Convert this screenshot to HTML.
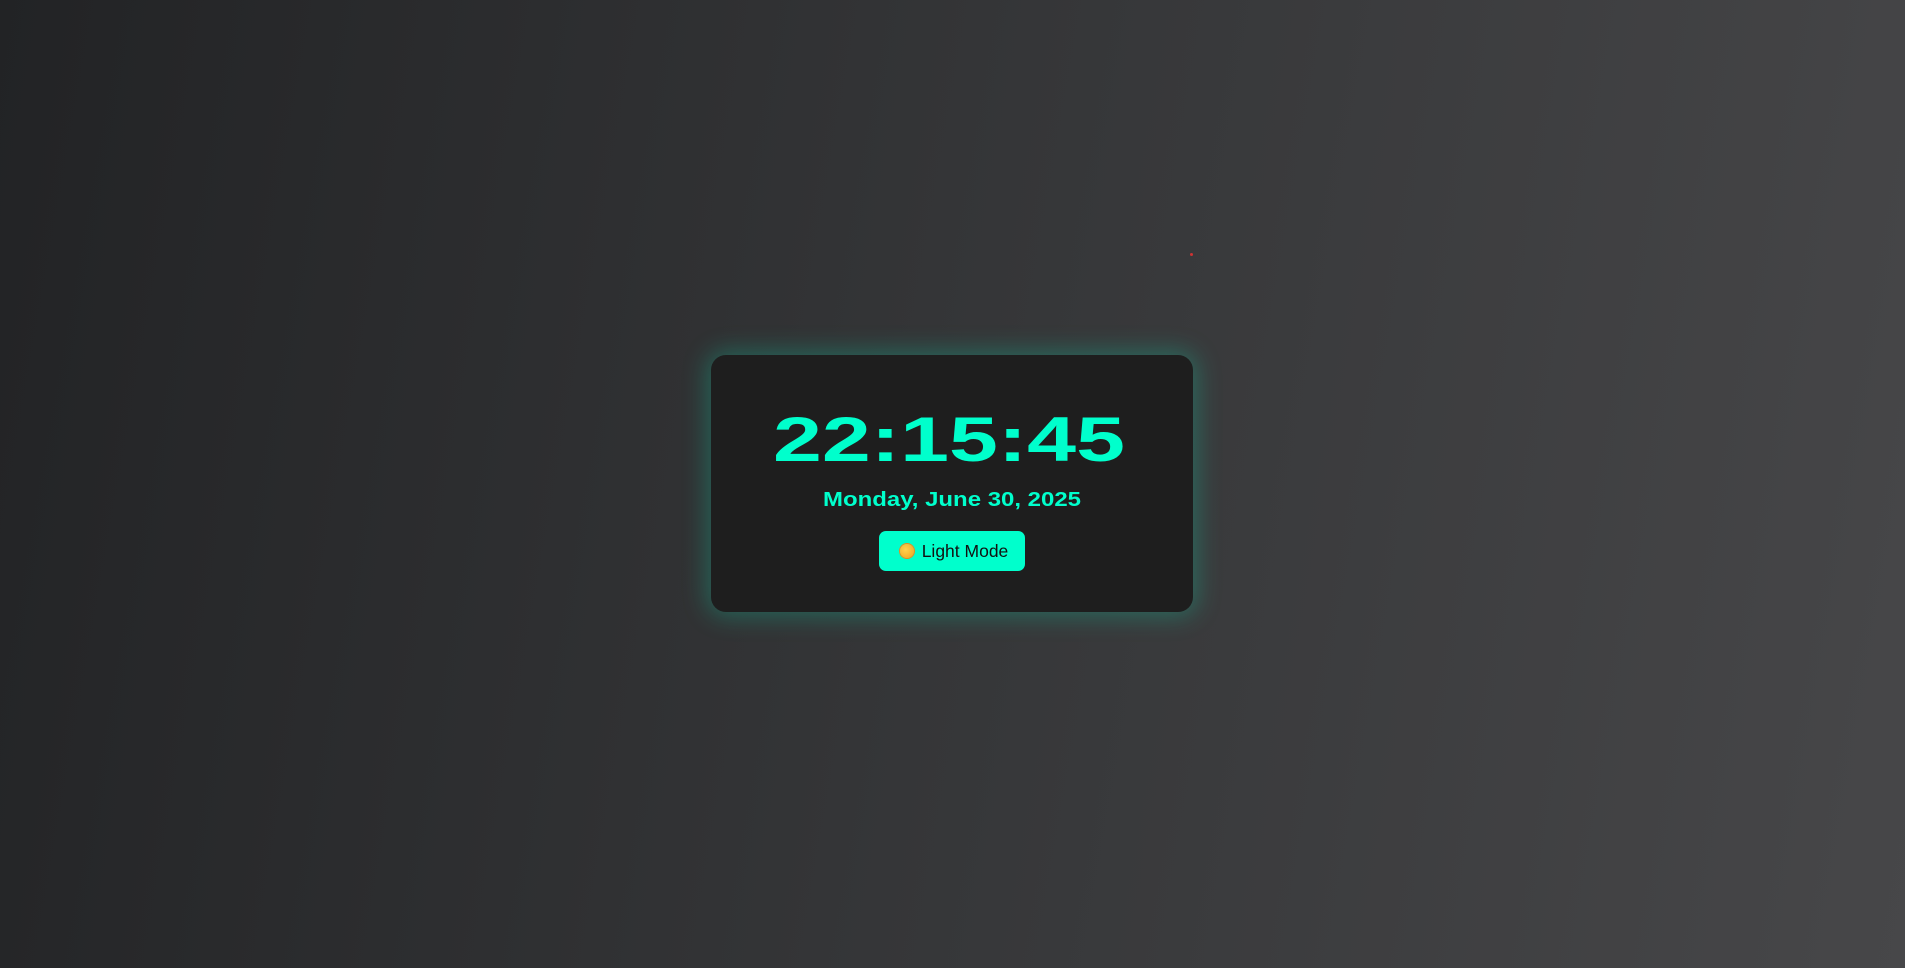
<!DOCTYPE html>
<html><head><style>
html,body{margin:0;padding:0;width:1905px;height:968px;overflow:hidden}
body{background:linear-gradient(100deg,#222325 0%,#353638 50%,#474749 100%);font-family:"Liberation Sans",sans-serif;position:relative}
.card{position:absolute;left:711px;top:355px;width:482px;height:257px;background:#1e1e1e;border-radius:15px;box-shadow:0 0 25px 4px rgba(0,255,200,.25)}
svg{position:absolute;left:0;top:0}
.btn{position:absolute;left:168px;top:176px;width:146px;height:40px;background:#00ffcc;border-radius:7px;font-size:17.5px;color:#111;display:flex;align-items:center;justify-content:center;gap:8px;padding-left:4px;box-sizing:border-box}
.sun{width:14px;height:14px;border-radius:50%;background:radial-gradient(circle at 40% 40%,#ffd34d,#f0a020);box-shadow:0 0 0 1px #e88a20}
.dot{position:absolute;left:1190px;top:253px;width:3px;height:3px;background:#c33;border-radius:50%}
</style></head><body>
<div class="dot"></div>
<div class="card">
<svg width="482" height="257">
<text x="62" y="106" font-family="Liberation Sans" font-weight="bold" font-size="63" fill="#00ffcc" textLength="352" lengthAdjust="spacingAndGlyphs">22:15:45</text>
<text x="112" y="151" font-family="Liberation Sans" font-weight="bold" font-size="20" fill="#00ffcc" textLength="258" lengthAdjust="spacingAndGlyphs">Monday, June 30, 2025</text>
</svg>
<div class="btn"><span class="sun"></span>Light Mode</div>
</div>
</body></html>
